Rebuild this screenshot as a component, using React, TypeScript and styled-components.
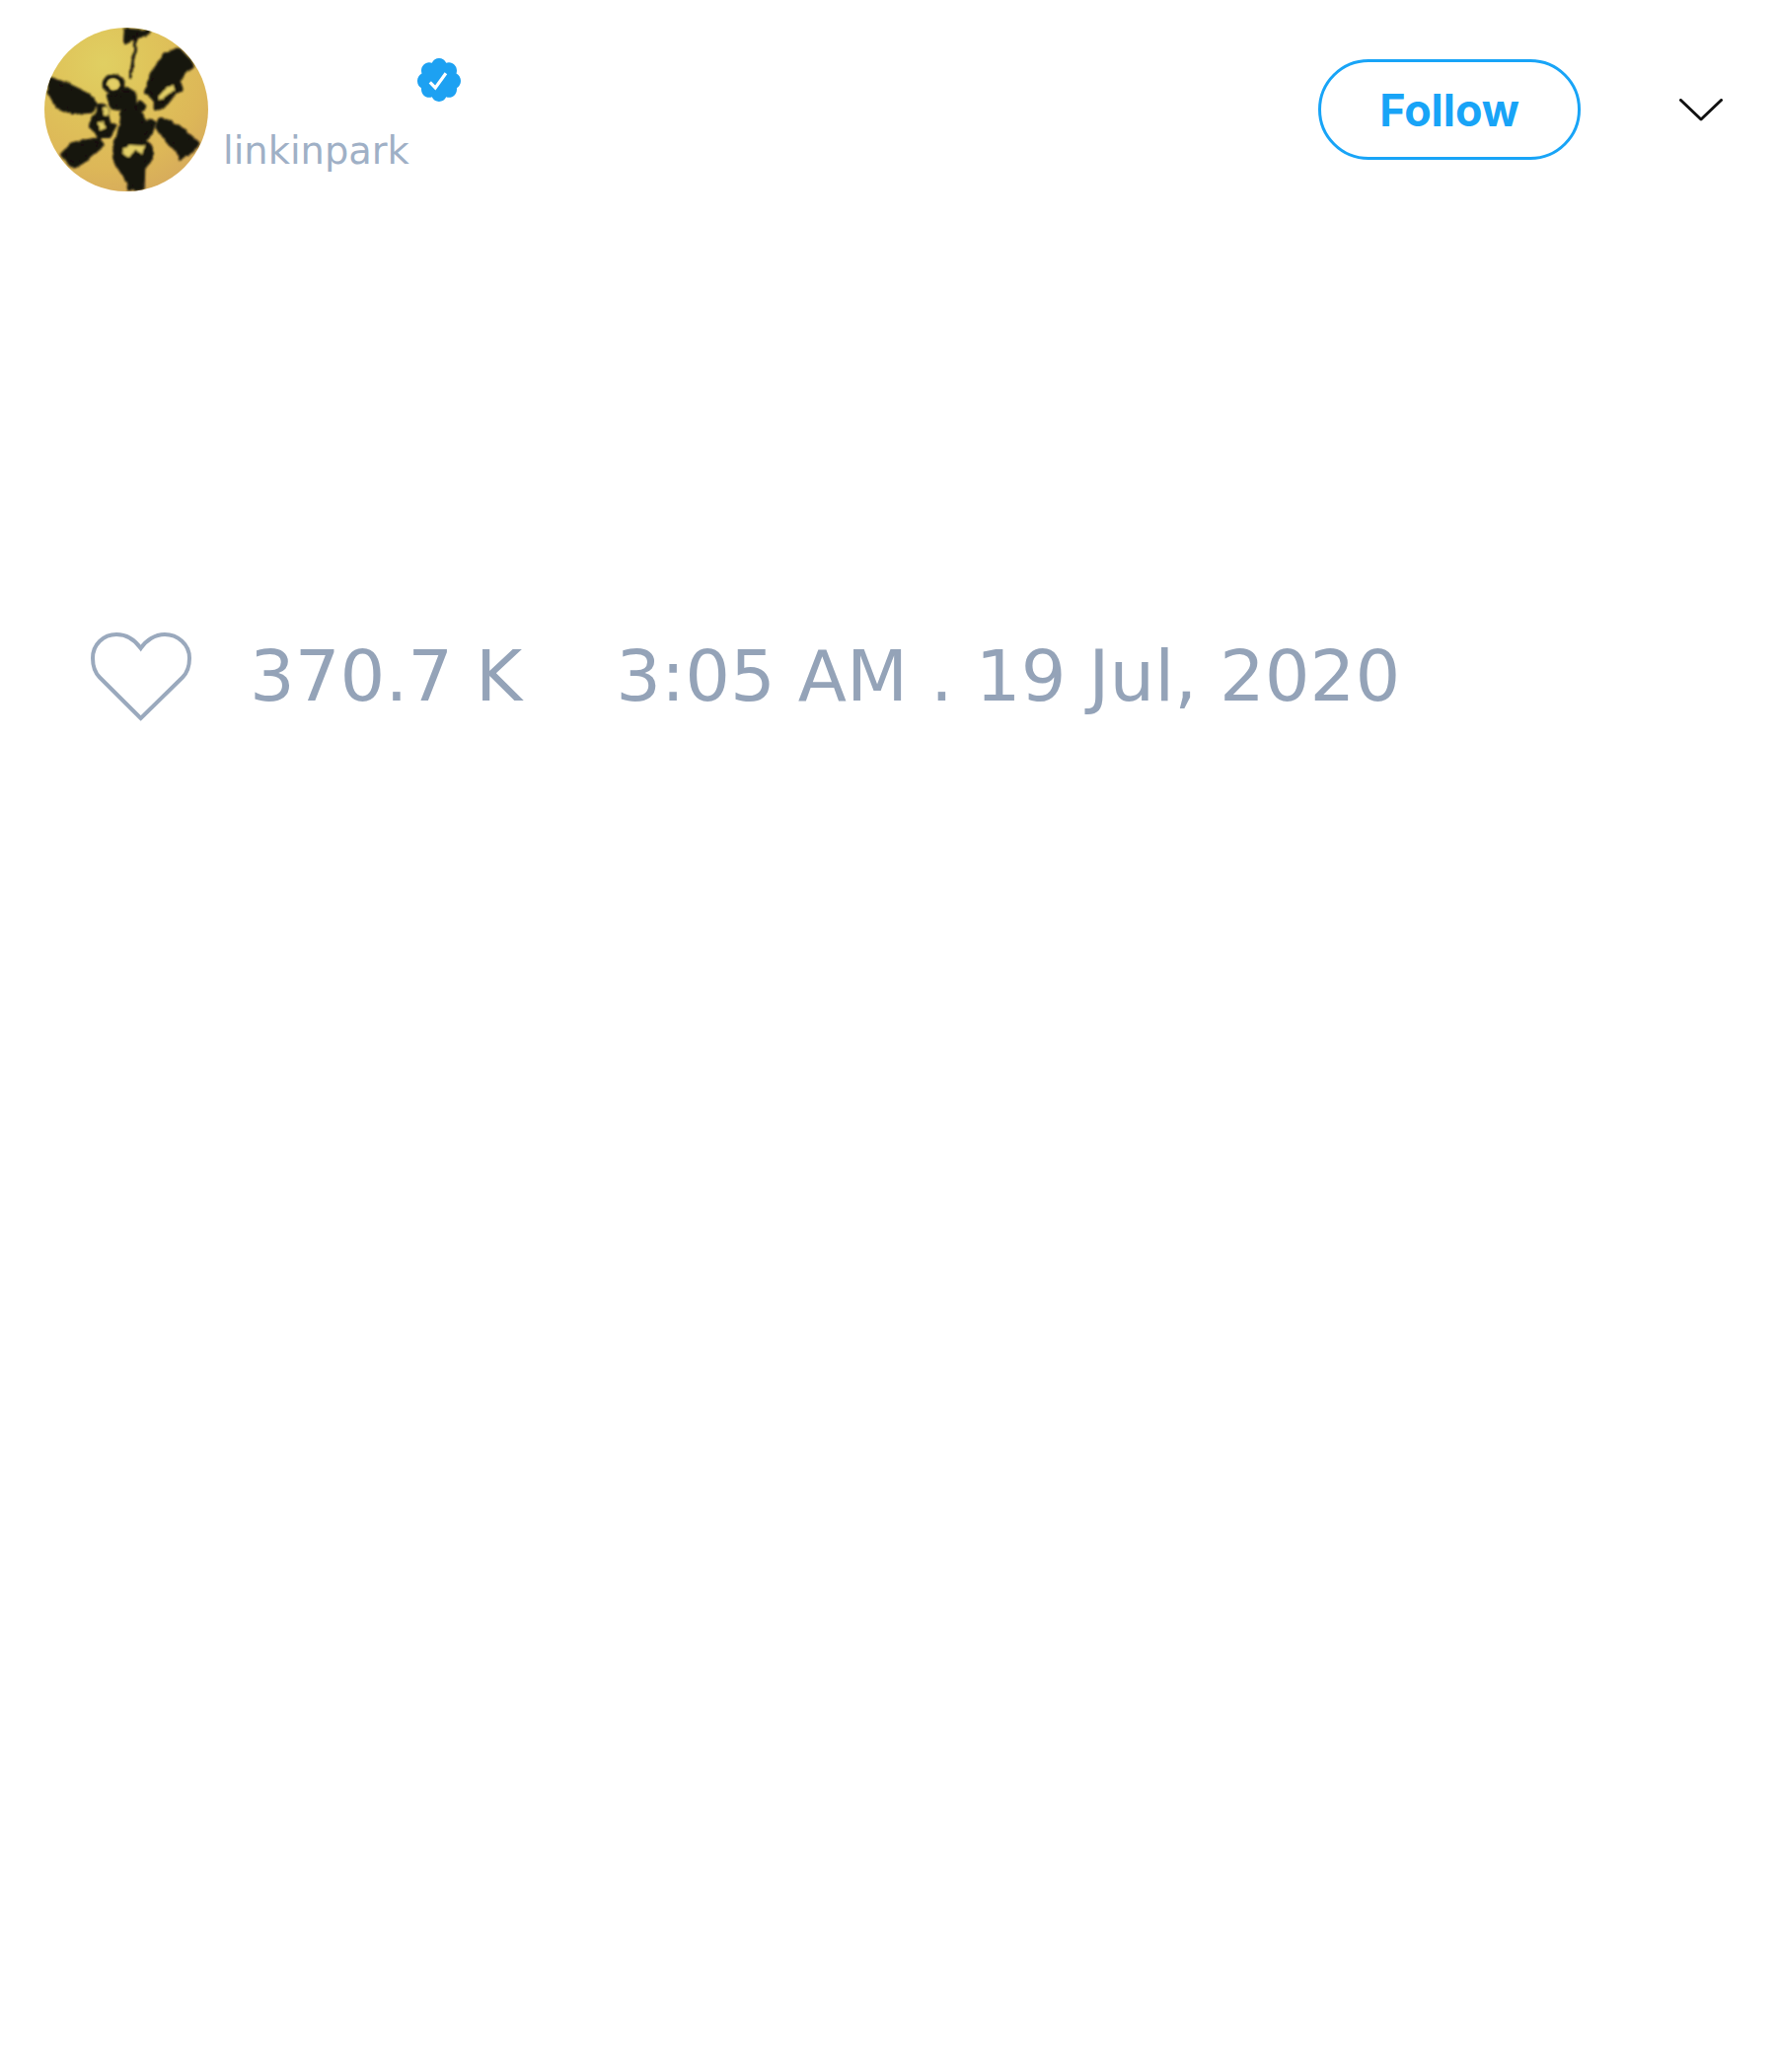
import styled, { createGlobalStyle } from 'styled-components';

const GlobalStyle = createGlobalStyle`
  html, body {
    margin: 0;
    padding: 0;
    background: #fff;
    font-family: "DejaVu Sans", sans-serif;
  }
`

const Page = styled.div`
  width: 1800px;
  height: 2100px;
  background: #fff;
`

const Header = styled.header`
  display: flex;
  align-items: center;
  padding: 28px 54px 0 45px;
`

const Avatar = styled.svg`
  display: block;
  flex: none;
  width: 166px;
  height: 166px;
  border-radius: 50%;
`

const UserInfo = styled.div`
  display: flex;
  flex-direction: column;
  align-self: flex-start;
  gap: 28px;
  margin: 31px 0 0 15px;
`

const NameRow = styled.div`
  display: flex;
  padding-left: 197px;
`

const Badge = styled.svg`
  display: block;
  width: 44px;
  height: 44px;
`

const Username = styled.span`
  font-size: 38.4px;
  line-height: 44px;
  color: #9fb0c6;
`

const FollowButton = styled.button`
  width: 266px;
  height: 102px;
  margin-left: auto;
  padding: 2px 0 0;
  border: 3px solid #18a4f7;
  border-radius: 51px;
  background: #fff;
  color: #18a4f7;
  font-family: Inter, "Liberation Sans", sans-serif;
  font-size: 44.8px;
  font-weight: 700;
`

const Chevron = styled.svg`
  display: block;
  width: 44px;
  height: 23px;
  margin-left: 100px;
`

const Stats = styled.div`
  display: flex;
  align-items: center;
  margin-top: 445px;
  padding-left: 92px;
`

const Heart = styled.svg`
  display: block;
  flex: none;
  width: 102px;
  height: 90px;
  margin: 2px 59px 0 0;
`

const StatText = styled.span<{ $gap?: number }>`
  margin-left: ${(p) => p.$gap ?? 0}px;
  font-size: 72px;
  color: #94a3b8;
`

const LinkinAvatar = () => (
  <Avatar viewBox="0 0 498 498">
    <defs>
      <radialGradient id="gold" cx="0.36" cy="0.22" r="0.85">
        <stop offset="0" stopColor="#e0cf62" />
        <stop offset="0.35" stopColor="#dfc45a" />
        <stop offset="0.75" stopColor="#ddb758" />
        <stop offset="1" stopColor="#d6aa5c" />
      </radialGradient>
      <filter id="rough" x="-10%" y="-10%" width="120%" height="120%">
        <feTurbulence type="fractalNoise" baseFrequency="0.045" numOctaves="2" seed="4" />
        <feDisplacementMap in="SourceGraphic" scale="12" xChannelSelector="R" yChannelSelector="G" />
        <feGaussianBlur stdDeviation="3" />
      </filter>
    </defs>
    <rect width="498" height="498" fill="url(#gold)" />
    <g transform="translate(-45 -53)" filter="url(#rough)">
      <g fill="#15120a" stroke="#15120a" strokeWidth="14" strokeLinejoin="round">
        {/* antenna */}
        <path d="M294 62L362 66L322 82L292 96Z" />
        <path d="M325 85L305 212" fill="none" strokeWidth="8" />
        {/* wings */}
        <path d="M64 210L110 226L165 252L200 285L188 306L130 310L88 292L60 250Z" />
        <path d="M452 120L495 165L450 212L460 240L442 248L415 282L388 300L378 268L355 245L378 188L412 138Z" />
        <path d="M398 330L450 354L510 405L496 426L475 436L460 450L446 418L420 398L390 352Z" />
        <path d="M208 392L220 410L188 438L140 475L122 462L100 440L132 408Z" />
        {/* body */}
        <path d="M288 238L318 252L320 300L350 340L378 342L368 372L345 395L368 420L368 450L345 480L343 542L304 542L300 518L262 460L258 420L272 380L282 330L285 290Z" />
        <path d="M240 260L285 252L285 300L250 295Z" />
        <path d="M212 288L232 300L238 340L258 352L242 382L215 382L190 355L194 328L210 312Z" />
        <path d="M335 284L348 292L338 304L326 296Z" />
      </g>
      <g fill="none" stroke="#15120a" strokeWidth="12">
        <ellipse cx="255" cy="225" rx="28" ry="24" />
      </g>
      <g fill="#e3cf66">
        <path d="M282 422L302 410L348 412L342 436L320 426L302 448L288 440Z" />
        <ellipse cx="254" cy="225" rx="17" ry="13" />
        <path d="M205 345L228 340L232 358L214 366Z" />
        <path d="M388 262L436 226L442 240L396 274Z" />
        <path d="M222 300L236 296L238 318L226 318Z" />
      </g>
    </g>
  </Avatar>
)

const VerifiedBadge = () => (
  <Badge viewBox="1.5 1.5 21 21">
    <path
      fill="#1da1f2"
      d="M22.5 12.5c0-1.58-.875-2.95-2.148-3.6.154-.435.238-.905.238-1.4 0-2.21-1.71-3.998-3.818-3.998-.47 0-.92.084-1.336.25C14.818 2.415 13.51 1.5 12 1.5s-2.816.917-3.437 2.25c-.415-.165-.866-.25-1.336-.25-2.11 0-3.818 1.79-3.818 4 0 .494.083.964.237 1.4-1.272.65-2.147 2.018-2.147 3.6 0 1.495.782 2.798 1.942 3.486-.02.17-.032.34-.032.514 0 2.21 1.708 4 3.818 4 .47 0 .92-.086 1.335-.25.62 1.334 1.926 2.25 3.437 2.25 1.512 0 2.818-.916 3.437-2.25.415.163.865.248 1.336.248 2.11 0 3.818-1.79 3.818-4 0-.174-.012-.344-.033-.513 1.158-.687 1.943-1.99 1.943-3.484z"
    />
    <path d="M7.6 13.1L10.2 15.8L15.3 8.8" fill="none" stroke="#fff" strokeWidth="1.5" />
  </Badge>
)

export default function App() {
  return (
    <Page>
      <GlobalStyle />
      <Header>
        <LinkinAvatar />
        <UserInfo>
          <NameRow>
            <VerifiedBadge />
          </NameRow>
          <Username>linkinpark</Username>
        </UserInfo>
        <FollowButton>Follow</FollowButton>
        <Chevron viewBox="0 0 44 23">
          <path d="M1.5 1.5L22 21L42.5 1.5" fill="none" stroke="#111" strokeWidth="3" strokeLinecap="round" strokeLinejoin="round" />
        </Chevron>
      </Header>
      <Stats>
        <Heart viewBox="0 0 102 90">
          <path
            d="M50.7 87L9 45.5C4 40.5 2 33 2 26C2 12 13 2 26 2C36 2 45 8 50.7 16C56 8 65 2 75 2C88 2 100 12 100 26C100 33 98 40.5 93 45.5Z"
            fill="none"
            stroke="#9aa9bd"
            strokeWidth="4"
          />
        </Heart>
        <StatText>370.7 K</StatText>
        <StatText $gap={95}>3:05 AM . 19 Jul, 2020</StatText>
      </Stats>
    </Page>
  );
}
